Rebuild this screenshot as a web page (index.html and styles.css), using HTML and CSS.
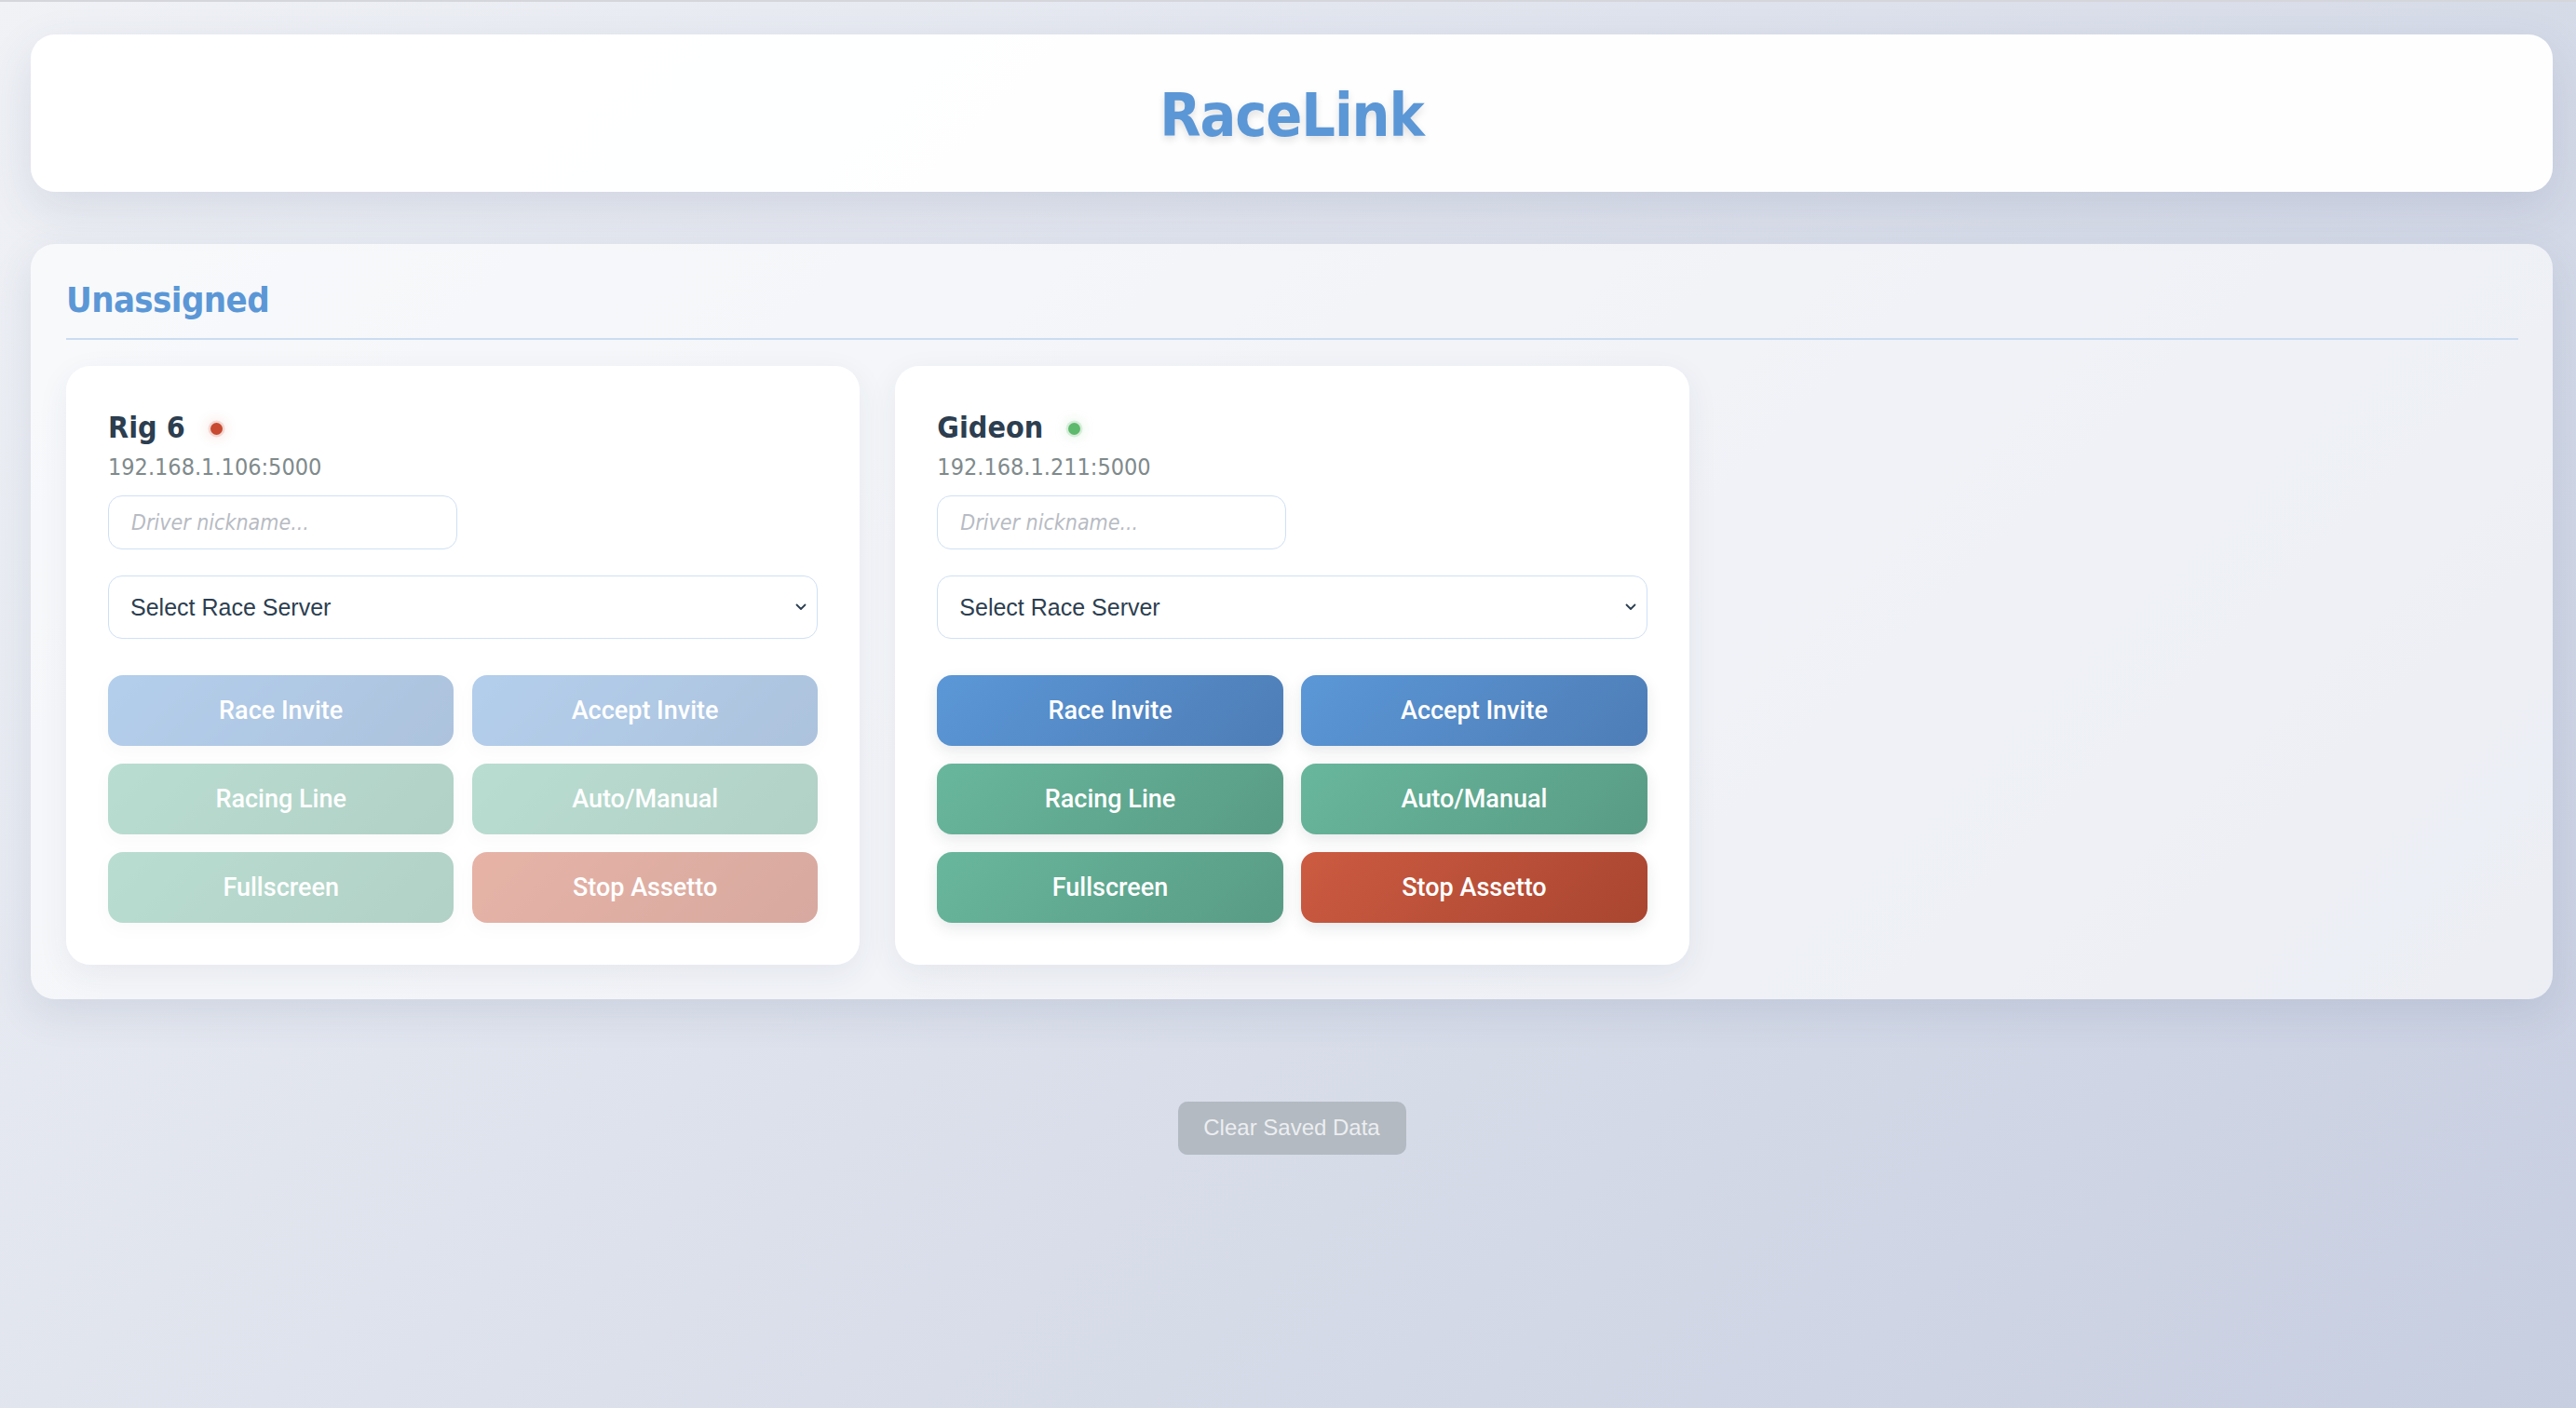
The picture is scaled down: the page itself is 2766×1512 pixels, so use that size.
FILE: index.html
```html
<!DOCTYPE html>
<html lang="en">
<head>
<meta charset="utf-8">
<title>RaceLink</title>
<link rel="stylesheet" href="styles.css">
</head>
<body>
<header class="app-header">
  <h1 class="brand">RaceLink</h1>
</header>

<section class="group">
  <h2 class="group-title">Unassigned</h2>
  <div class="rig-grid">
    <div class="rig-card">
      <div class="rig-head">
        <span class="rig-name">Rig 6</span>
        <span class="status-dot offline"></span>
      </div>
      <div class="rig-ip">192.168.1.106:5000</div>
      <input class="nick" type="text" placeholder="Driver nickname...">
      <div class="select-wrap">
        <select class="server-select">
          <option>Select Race Server</option>
        </select>
        <svg class="chev" width="12" height="8" viewBox="0 0 12 8"><path d="M1.5 1.5 L6 6 L10.5 1.5" fill="none" stroke="#2c3e50" stroke-width="1.8" stroke-linecap="round" stroke-linejoin="round"/></svg>
      </div>
      <div class="actions disabled">
        <button class="btn blue">Race Invite</button>
        <button class="btn blue">Accept Invite</button>
        <button class="btn green">Racing Line</button>
        <button class="btn green">Auto/Manual</button>
        <button class="btn green">Fullscreen</button>
        <button class="btn red">Stop Assetto</button>
      </div>
    </div>

    <div class="rig-card">
      <div class="rig-head">
        <span class="rig-name">Gideon</span>
        <span class="status-dot online"></span>
      </div>
      <div class="rig-ip">192.168.1.211:5000</div>
      <input class="nick" type="text" placeholder="Driver nickname...">
      <div class="select-wrap">
        <select class="server-select">
          <option>Select Race Server</option>
        </select>
        <svg class="chev" width="12" height="8" viewBox="0 0 12 8"><path d="M1.5 1.5 L6 6 L10.5 1.5" fill="none" stroke="#2c3e50" stroke-width="1.8" stroke-linecap="round" stroke-linejoin="round"/></svg>
      </div>
      <div class="actions">
        <button class="btn blue">Race Invite</button>
        <button class="btn blue">Accept Invite</button>
        <button class="btn green">Racing Line</button>
        <button class="btn green">Auto/Manual</button>
        <button class="btn green">Fullscreen</button>
        <button class="btn red">Stop Assetto</button>
      </div>
    </div>
  </div>
</section>

<div class="footer-actions">
  <button class="clear-btn">Clear Saved Data</button>
</div>
</body>
</html>
```

FILE: styles.css
```css
* { box-sizing: border-box; }

html, body { margin: 0; }

body {
  min-height: 100vh;
  padding: 35px 25px 60px 33px;
  font-family: "DejaVu Sans Condensed", "DejaVu Sans", sans-serif;
  font-stretch: condensed;
  color: #2c3e50;
  background: linear-gradient(135deg, #f0f2f6 0%, #c7cee0 100%);
  border-top: 2px solid #d4d6db;
}

.app-header {
  height: 169px;
  display: flex;
  align-items: center;
  justify-content: center;
  background: rgba(255, 255, 255, 0.96);
  border-radius: 26px;
  box-shadow: 0 18px 50px rgba(60, 80, 120, 0.13);
}

.brand {
  margin: 0;
  font-size: 64px;
  font-weight: bold;
  letter-spacing: -1.1px;
  color: #5b97d6;
  text-shadow: 0 4px 8px rgba(0, 0, 0, 0.12);
  line-height: 1;
  padding-top: 5px;
}

.group {
  margin-top: 56px;
  padding: 38px 37px 37px 38px;
  background: rgba(255, 255, 255, 0.62);
  border-radius: 26px;
  box-shadow: 0 14px 44px rgba(60, 80, 120, 0.12);
}

.group-title {
  margin: 0;
  font-size: 38px;
  font-weight: bold;
  letter-spacing: -0.6px;
  color: #5b97d6;
  line-height: 44px;
  padding-bottom: 19px;
  border-bottom: 2.5px solid #cbdcf2;
}

.rig-grid {
  margin-top: 28px;
  display: grid;
  grid-template-columns: repeat(3, 1fr);
  gap: 38px;
}

.rig-card {
  background: rgba(255, 255, 255, 0.97);
  border-radius: 26px;
  padding: 46px 45px 45px;
  box-shadow: 0 10px 34px rgba(40, 60, 100, 0.07);
  display: flex;
  flex-direction: column;
}

.rig-head {
  display: flex;
  align-items: center;
  height: 40px;
}

.rig-name {
  font-size: 32px;
  font-weight: bold;
  color: #2c3e50;
  line-height: 40px;
}

.status-dot {
  width: 13px;
  height: 13px;
  border-radius: 50%;
  margin-left: 27px;
  margin-top: 3px;
}

.status-dot.offline {
  background: #c84a30;
  box-shadow: 0 0 0 2.5px rgba(200, 74, 48, 0.16), 0 0 16px rgba(200, 74, 48, 0.32);
}

.status-dot.online {
  background: #5db96b;
  box-shadow: 0 0 0 2.5px rgba(93, 185, 107, 0.2), 0 0 16px rgba(93, 185, 107, 0.32);
}

.rig-ip {
  margin-top: 6px;
  font-size: 25px;
  line-height: 34px;
  color: #7f8a8c;
}

.nick {
  margin-top: 13px;
  width: 375px;
  height: 58px;
  padding: 0 24px;
  border: 1.5px solid #cfe0f5;
  border-radius: 15px;
  background: #fff;
  font-family: "DejaVu Sans Condensed", "DejaVu Sans", sans-serif;
  font-stretch: condensed;
  font-size: 23px;
  color: #2c3e50;
  outline: none;
}

.nick::placeholder {
  color: #b7bbc3;
  font-style: italic;
}

.select-wrap {
  position: relative;
  margin-top: 28px;
}

.server-select {
  width: 100%;
  height: 68px;
  padding: 0 40px 0 23px;
  border: 1.5px solid #cfe0f5;
  border-radius: 15px;
  background: #fff;
  font-family: "Liberation Sans", Arial, sans-serif;
  font-size: 25px;
  color: #2c3e50;
  appearance: none;
  -webkit-appearance: none;
  outline: none;
}

.chev {
  position: absolute;
  right: 12px;
  top: 30px;
  pointer-events: none;
}

.actions {
  margin-top: 39px;
  display: grid;
  grid-template-columns: 1fr 1fr;
  grid-auto-rows: 75.5px;
  gap: 19.5px;
}

.btn {
  border: none;
  border-radius: 16px;
  font-family: Roboto, "Liberation Sans", sans-serif;
  font-weight: 500;
  font-size: 27px;
  color: #fff;
  box-shadow: 0 6px 16px rgba(30, 40, 60, 0.1);
  cursor: pointer;
}

.btn.blue { background: linear-gradient(135deg, #5b97d7 0%, #4e7db6 100%); }
.btn.green { background: linear-gradient(135deg, #68b79c 0%, #599b85 100%); }
.btn.red { background: linear-gradient(135deg, #cc5b41 0%, #a94530 100%); }

.actions.disabled .btn {
  opacity: 0.46;
  box-shadow: 0 6px 16px rgba(30, 40, 60, 0.05);
  cursor: default;
}

.footer-actions {
  margin-top: 110px;
  display: flex;
  justify-content: center;
}

.clear-btn {
  width: 245px;
  height: 57px;
  border: none;
  border-radius: 10px;
  background: #b3bac1;
  color: #eceef1;
  font-family: "Liberation Sans", Arial, sans-serif;
  font-size: 24px;
}
```
